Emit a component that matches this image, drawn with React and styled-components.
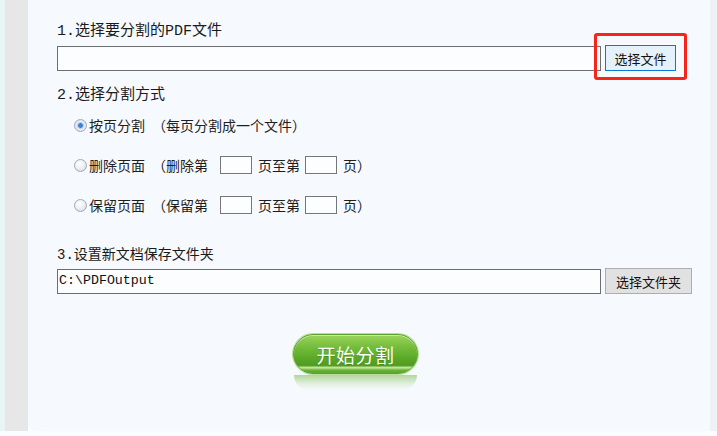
import React from 'react';
import styled, { createGlobalStyle } from 'styled-components';

const GlobalStyle = createGlobalStyle`
    html, body {
        margin: 0;
        padding: 0;
        background: #fbfcff;
    }
    body {
        font-family: "Noto Sans CJK SC", "Noto Sans", sans-serif;
        color: #1e1e1e;
    }
`;

const Page = styled.div`
    display: flex;
    width: 717px;
    height: 436px;
    overflow: hidden;
    background: #fbfcff;
`;

const LeftEdge = styled.div`
    width: 5px;
    height: 431px;
    background: #e8f5f5;
`;

const Gutter = styled.div`
    width: 23px;
    height: 431px;
    background: #e7e7e7;
`;

const Panel = styled.div`
    flex: 1;
    height: 435px;
    margin-top: -4px;
    padding: 26px 17px 0 29px;
    box-sizing: border-box;
    background: #f6f9fe;
    border-radius: 8px 0 0 8px;
    display: flex;
    flex-direction: column;
`;

const RightEdge = styled.div`
    width: 7px;
    height: 431px;
    background: #eef2f7;
`;

const Heading = styled.div`
    font-family: "Liberation Mono", "Noto Sans CJK SC", monospace;
    font-size: ${(p) => p.$size || 15}px;
    line-height: 20px;
    height: 20px;
    margin-top: ${(p) => p.$top || 0}px;
    color: #1a1a1a;
`;

const FieldRow = styled.div`
    display: flex;
    align-items: center;
    gap: 4px;
    margin-top: ${(p) => p.$top || 5}px;
`;

const PathInput = styled.div`
    width: 544px;
    height: 25px;
    box-sizing: border-box;
    border: 1px solid #6e6e6e;
    background: #fbfdff;
    font-family: "Liberation Mono", monospace;
    font-size: 13.3px;
    line-height: 22px;
    padding-left: 1px;
    color: #111;
`;

const Highlight = styled.div`
    position: relative;
    display: flex;
`;

const RedFrame = styled.div`
    position: absolute;
    top: -12px;
    left: -11px;
    right: -11px;
    bottom: -9px;
    border: 3px solid #f7241a;
    border-radius: 3px;
    pointer-events: none;
`;

const SysButton = styled.button`
    height: 26px;
    width: ${(p) => p.$width}px;
    box-sizing: border-box;
    padding: 0;
    font-family: "Noto Sans CJK SC", sans-serif;
    font-size: 13px;
    color: #111;
    background: ${(p) => (p.$focused ? '#e5f1fb' : '#e1e1e1')};
    border: 1px solid ${(p) => (p.$focused ? '#0a78d4' : '#adadad')};
    border-radius: 0;
`;

const Options = styled.div`
    display: flex;
    flex-direction: column;
    padding-left: 17px;
    margin-top: -1px;
`;

const OptionRow = styled.div`
    display: flex;
    align-items: center;
    height: 40px;
    font-size: 14px;
    color: #1e1e1e;
`;

const Radio = styled.span`
    width: 13px;
    height: 13px;
    box-sizing: border-box;
    border-radius: 50%;
    border: 1px solid #a3a9b3;
    background: ${(p) =>
        p.$checked
            ? 'radial-gradient(circle, #3d7fd6 0 2px, #9fc2ec 2.5px, #e6edf6 4px, #d2d8e1 100%)'
            : 'radial-gradient(circle at 40% 35%, #ffffff 0, #eef1f5 45%, #cdd3dc 100%)'};
    margin-right: 2px;
`;

const OptionLabel = styled.span`
    width: 63px;
`;

const Hint = styled.span`
    white-space: pre;
`;

const PageBox = styled.span`
    display: inline-block;
    width: 32px;
    height: 18px;
    box-sizing: border-box;
    border: 1px solid #767676;
    background: #fdfeff;
    margin: 0 ${(p) => p.$right || 6}px 0 ${(p) => p.$left || 5}px;
`;

const StartWrap = styled.div`
    margin-top: 40px;
    padding-left: 236px;
`;

const StartButton = styled.button`
    position: relative;
    width: 125px;
    height: 40px;
    padding: 0;
    border-radius: 20px;
    border: 1px solid #5ea22e;
    background: linear-gradient(
        to bottom,
        #9ad45c 0%,
        #76be3c 30%,
        #5aa828 62%,
        #4f9c20 80%,
        #c9eaa6 86%,
        #6cb438 92%,
        #5aa52a 100%
    );
    box-shadow: inset 0 1px 0 rgba(255, 255, 255, 0.45), 0 0 0 1px #b9de98;
    font-family: "Noto Sans CJK SC", sans-serif;
    font-size: 19px;
    color: #ffffff;
    letter-spacing: 0.5px;
    text-shadow: 0 1px 1px rgba(40, 90, 10, 0.35);

    &::after {
        content: '';
        position: absolute;
        left: 0;
        right: 0;
        top: calc(100% + 2px);
        height: 15px;
        border-radius: 0 0 18px 18px;
        background: linear-gradient(
            to bottom,
            rgba(110, 180, 60, 0.5),
            rgba(160, 210, 120, 0.22) 60%,
            rgba(246, 249, 254, 0)
        );
    }
`;

export default function App() {
    return (
        <Page>
            <GlobalStyle />
            <LeftEdge />
            <Gutter />
            <Panel>
                <Heading>1.选择要分割的PDF文件</Heading>
                <FieldRow $top={3}>
                    <PathInput />
                    <Highlight>
                        <SysButton $focused $width={71}>选择文件</SysButton>
                        <RedFrame />
                    </Highlight>
                </FieldRow>

                <Heading $top={15}>2.选择分割方式</Heading>
                <Options>
                    <OptionRow>
                        <Radio $checked />
                        <OptionLabel>按页分割</OptionLabel>
                        <Hint>（每页分割成一个文件）</Hint>
                    </OptionRow>
                    <OptionRow>
                        <Radio />
                        <OptionLabel>删除页面</OptionLabel>
                        <Hint>（删除第</Hint>
                        <PageBox $left={12} />
                        <Hint>页至第</Hint>
                        <PageBox />
                        <Hint>页）</Hint>
                    </OptionRow>
                    <OptionRow>
                        <Radio />
                        <OptionLabel>保留页面</OptionLabel>
                        <Hint>（保留第</Hint>
                        <PageBox $left={12} />
                        <Hint>页至第</Hint>
                        <PageBox />
                        <Hint>页）</Hint>
                    </OptionRow>
                </Options>

                <Heading $size={14} $top={20}>3.设置新文档保存文件夹</Heading>
                <FieldRow $top={3}>
                    <PathInput>C:\PDFOutput</PathInput>
                    <SysButton $width={87}>选择文件夹</SysButton>
                </FieldRow>

                <StartWrap>
                    <StartButton>开始分割</StartButton>
                </StartWrap>
            </Panel>
            <RightEdge />
        </Page>
    );
}
